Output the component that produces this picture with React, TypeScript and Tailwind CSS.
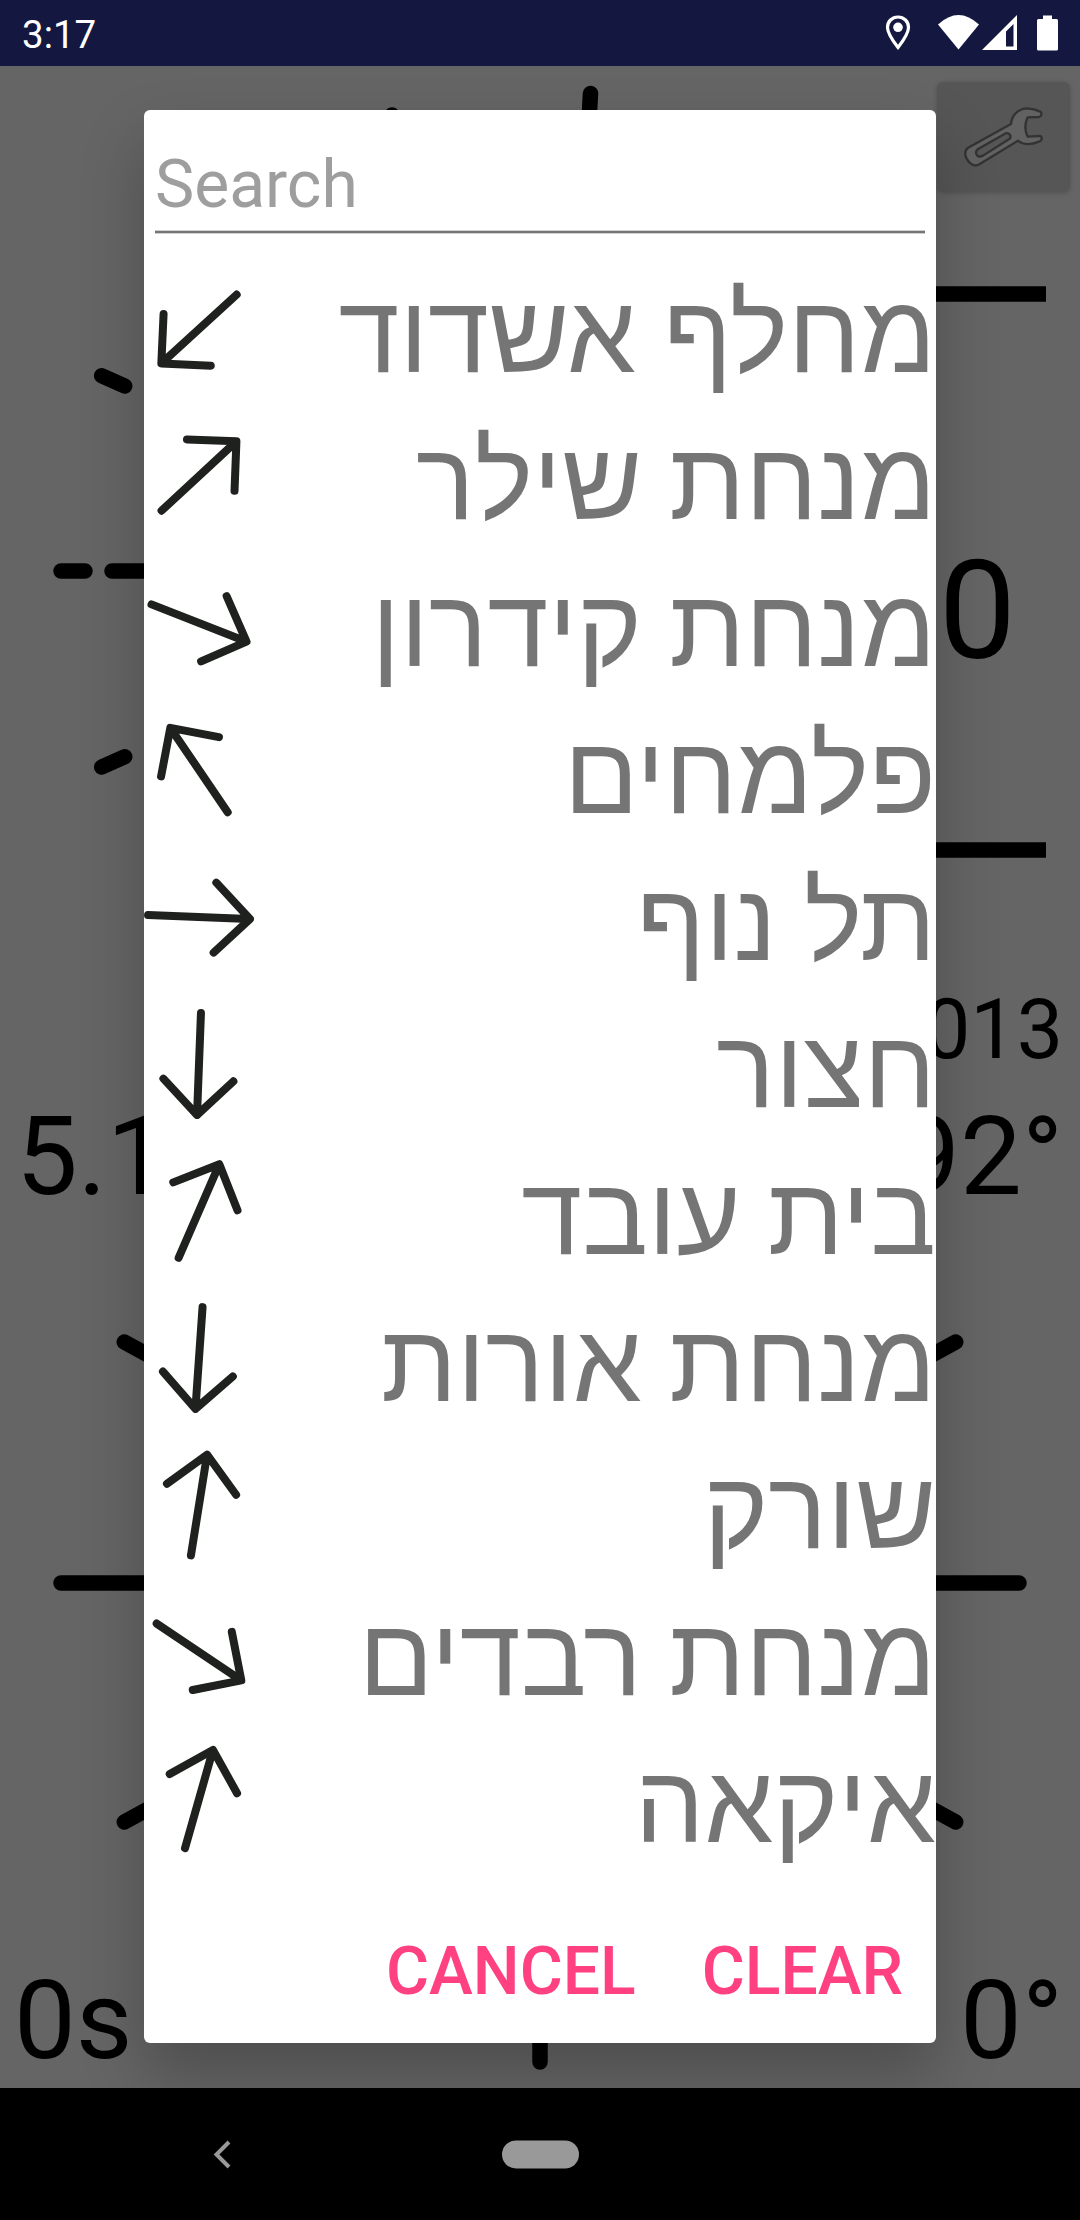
const places = [
  { name: "מחלף אשדוד", angle: 137.6 },
  { name: "מנחת שילר", angle: -42.8 },
  { name: "מנחת קידרון", angle: 21.4 },
  { name: "פלמחים", angle: -124.2 },
  { name: "תל נוף", angle: 2.2 },
  { name: "חצור", angle: 92.2 },
  { name: "בית עובד", angle: -66.5 },
  { name: "מנחת אורות", angle: 94 },
  { name: "שורק", angle: -80.9 },
  { name: "מנחת רבדים", angle: 33.9 },
  { name: "איקאה", angle: -74.1 },
];

function Arrow({ angle }: { angle: number }) {
  return (
    <svg width="110" height="110" viewBox="-55 -55 110 110" className="shrink-0">
      <g transform={`rotate(${angle})`} fill="none" stroke="#1f211e" strokeWidth="8" strokeLinecap="round" strokeLinejoin="round">
        <path d="M-51 0H50M16 -35L51 0L16 35" />
      </g>
    </svg>
  );
}

function StatusBar() {
  return (
    <header className="flex h-[66px] items-center justify-between bg-[#141840] text-white">
      <span className="pl-[22px] pt-[4px] text-[38.5px] leading-none">3:17</span>
      <svg width="210" height="66" viewBox="870 0 210 66" fill="#fff">
        <path d="M898 17C904 17 908.5 21.500 908.500 27.500C908.500 34 898 47.500 898 47.500S887.500 34 887.500 27.500C887.500 21.500 892 17 898 17Z" fill="none" stroke="#fff" strokeWidth="3.200" />
        <circle cx="898" cy="27.300" r="4.800" />
        <path d="M938 24.500Q958.500 5.500 979 24.500L958.500 49.500Z" />
        <path fillRule="evenodd" d="M982 50L1017 15V50ZM1006 46.500H1013.500V24L1006 31.500Z" />
        <path d="M1043 15.500H1052V19H1056.500Q1058 19 1058 20.500V49Q1058 50.500 1056.500 50.500H1038.500Q1037 50.500 1037 49V20.500Q1037 19 1038.500 19H1043Z" />
      </svg>
    </header>
  );
}

function Gauges() {
  return (
    <svg width="1080" height="2022" viewBox="0 66 1080 2022" className="absolute inset-0" stroke="#000" strokeWidth="15.500" strokeLinecap="round">
      <path d="M101.700 375.700L124.700 386M101.700 767L124.700 756.700M61 571H85M112 571H200M590.500 93.500L589 120M392 115V130" />
      <path d="M124.300 1342L170 1367M124.300 1822L170 1797M955.700 1342L910 1367M955.700 1822L910 1797M61 1583H1019M540 1900V2062" />
      <path d="M800 294H1046M800 850H1046" strokeLinecap="butt" />
    </svg>
  );
}

function Wrench() {
  return (
    <svg width="81.700" height="63.300" viewBox="98 105 245 190" fill="#626262" stroke="#333" strokeWidth="7" strokeLinejoin="round">
      <path d="M112 234L242 162C244 136 264 116 290 115Q312 116 330 125Q335 128 333 134Q332 140 326 141L292 142Q278 171 292 200L328 198Q335 200 334 208Q333 213 326 215C300 226 280 226 263 212L147 283Q136 290 124 283Q110 273 105 256Q103 241 112 234Z" />
      <path d="M142 238L224 191Q232 187 238 193Q243 200 238 206L158 257Q147 263 140 256Q133 245 142 238Z" fill="#565656" />
    </svg>
  );
}

export default function App() {
  return (
    <div className="flex h-[2220px] w-[1080px] flex-col overflow-hidden bg-black font-['Roboto',sans-serif]">
      <StatusBar />
      <main className="relative h-[2022px] overflow-hidden bg-[#656565] text-black">
        <Gauges />
        <div className="absolute right-[10px] top-[16px] flex h-[110px] w-[133px] items-center justify-center rounded-[6px] bg-[#565656] shadow-[0_1px_5px_rgba(0,0,0,0.2)]">
          <Wrench />
        </div>
        <span className="absolute right-[64px] top-[465px] text-[137.5px] leading-[161px]">0</span>
        <span className="absolute right-[17px] top-[915px] text-[82.5px] leading-[97px]">1013</span>
        <span className="absolute left-[16px] top-[1026px] text-[110px] leading-[129px]">5.1</span>
        <span className="absolute right-[17px] top-[1026px] text-[110px] leading-[129px]">92°</span>
        <span className="absolute left-[14px] top-[1890px] text-[110px] leading-[129px]">0s</span>
        <span className="absolute right-[17px] top-[1890px] text-[110px] leading-[129px]">0°</span>

        <section className="absolute left-[144px] top-[44px] flex h-[1933px] w-[792px] flex-col rounded-[6px] bg-white shadow-[0_32px_64px_rgba(0,0,0,0.24)]">
          <div className="mx-[11px] flex h-[124px] flex-col justify-end">
            <span className="mb-[7px] text-[66px] leading-[77px] text-[#9e9e9e]">Search</span>
            <div className="h-[4px] border-y border-[#d0d0d0] bg-[#757575]" />
          </div>
          <ul className="mt-[21px] flex flex-col">
            {places.map((p) => (
              <li key={p.name} className="flex h-[147px] items-center justify-between">
                <Arrow angle={p.angle} />
                <span dir="rtl" className="whitespace-nowrap pt-[12px] font-['Roboto','Liberation_Sans',sans-serif] text-[110px] leading-[135px] text-[#757575]">
                  {p.name}
                </span>
              </li>
            ))}
          </ul>
          <div className="flex flex-1 items-center justify-end gap-[66px] pr-[33px] pt-[28px] text-[66px] font-medium leading-[77px] text-[#ff4081]">
            <button>CANCEL</button>
            <button>CLEAR</button>
          </div>
        </section>
      </main>
      <nav className="flex h-[132px] items-center">
        <svg width="1080" height="132" viewBox="0 2088 1080 132">
          <path d="M229 2142L216.500 2154.500L229 2167" fill="none" stroke="#999" strokeWidth="4" />
          <rect x="502" y="2140.500" width="77" height="28" rx="14" fill="#999" />
        </svg>
      </nav>
    </div>
  );
}
